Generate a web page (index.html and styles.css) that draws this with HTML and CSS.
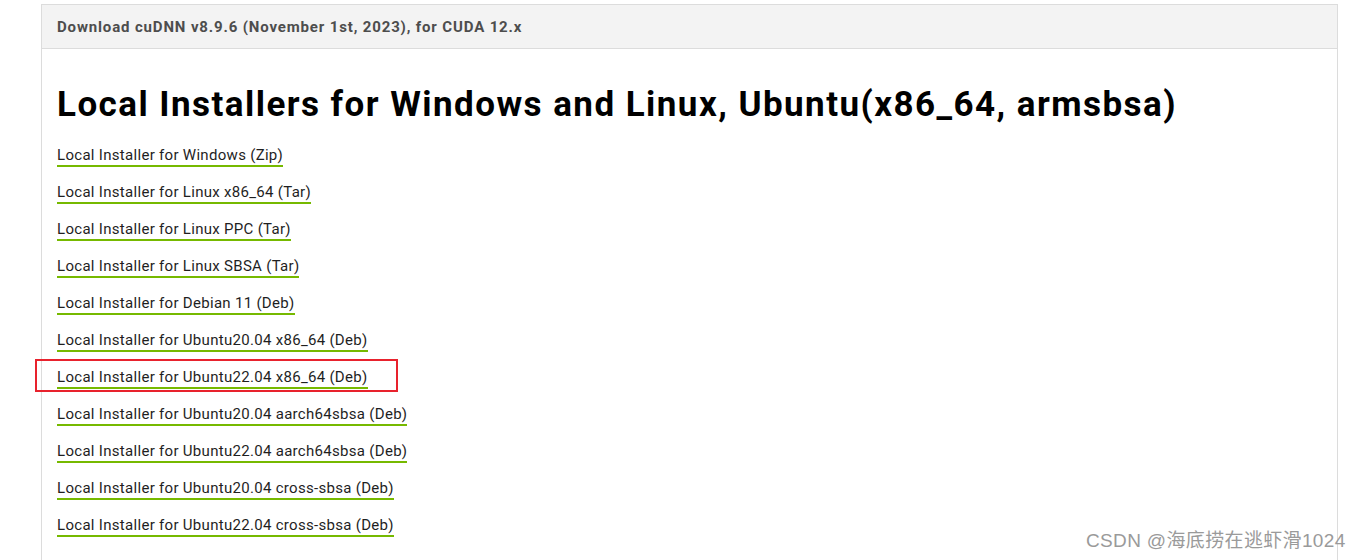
FILE: index.html
```html
<!DOCTYPE html>
<html>
<head>
<meta charset="utf-8">
<link rel="stylesheet" href="styles.css">
</head>
<body>
<div class="panel">
  <div class="panel-header">Download cuDNN v8.9.6 (November 1st, 2023), for CUDA 12.x</div>
  <div class="panel-body">
    <h1 class="title">Local Installers for Windows and Linux, Ubuntu(x86_64, armsbsa)</h1>
    <ul class="links">
      <li><a class="dl" href="#">Local Installer for Windows (Zip)</a></li>
      <li><a class="dl" href="#">Local Installer for Linux x86_64 (Tar)</a></li>
      <li><a class="dl" href="#">Local Installer for Linux PPC (Tar)</a></li>
      <li><a class="dl" href="#">Local Installer for Linux SBSA (Tar)</a></li>
      <li><a class="dl" href="#">Local Installer for Debian 11 (Deb)</a></li>
      <li><a class="dl" href="#">Local Installer for Ubuntu20.04 x86_64 (Deb)</a></li>
      <li class="marked"><a class="dl" href="#">Local Installer for Ubuntu22.04 x86_64 (Deb)</a></li>
      <li><a class="dl" href="#">Local Installer for Ubuntu20.04 aarch64sbsa (Deb)</a></li>
      <li><a class="dl" href="#">Local Installer for Ubuntu22.04 aarch64sbsa (Deb)</a></li>
      <li><a class="dl" href="#">Local Installer for Ubuntu20.04 cross-sbsa (Deb)</a></li>
      <li><a class="dl" href="#">Local Installer for Ubuntu22.04 cross-sbsa (Deb)</a></li>
    </ul>
  </div>
</div>
<div class="watermark">CSDN @海底捞在逃虾滑1024</div>
</body>
</html>
```
FILE: styles.css
```css
html, body {
  margin: 0;
  padding: 0;
  background: #ffffff;
  height: 560px;
  overflow: hidden;
}
body {
  font-family: Roboto, "Liberation Sans", sans-serif;
  position: relative;
}
.panel {
  margin: 4px 0 0 41px;
  width: 1297px;
  height: 556px;
  box-sizing: border-box;
  border: 1px solid #dcdcdc;
  border-bottom: none;
}
.panel-header {
  background: #f3f3f3;
  border-bottom: 1px solid #dcdcdc;
  height: 44px;
  box-sizing: border-box;
  padding: 13px 0 0 15px;
  font-size: 15px;
  font-weight: 700;
  color: #4d4d4d;
  line-height: 18px;
  letter-spacing: 0.85px;
}
.panel-body {
  padding: 0 15px;
}
.title {
  margin: 35px 0 0 0;
  font-size: 35px;
  line-height: 42px;
  font-weight: 700;
  color: #000;
  letter-spacing: 1.45px;
}
.links {
  list-style: none;
  margin: 19px 0 0 0;
  padding: 0;
}
.links li {
  height: 37px;
  position: relative;
}
.dl {
  display: inline-block;
  font-size: 15px;
  line-height: 18px;
  color: #1f1f1f;
  text-decoration: none;
  border-bottom: 2px solid #76b900;
  padding-bottom: 1px;
  letter-spacing: 0.3px;
}
.marked::before {
  content: "";
  position: absolute;
  left: -22px;
  top: -8px;
  width: 363px;
  height: 33px;
  box-sizing: border-box;
  border: 2px solid #e8222d;
}
.watermark {
  position: absolute;
  left: 1086px;
  top: 530px;
  font-family: "Liberation Sans", "Noto Sans CJK SC", sans-serif;
  font-size: 19px;
  line-height: 22px;
  color: #9a9a9a;
  white-space: nowrap;
  letter-spacing: 0.35px;
}
```
